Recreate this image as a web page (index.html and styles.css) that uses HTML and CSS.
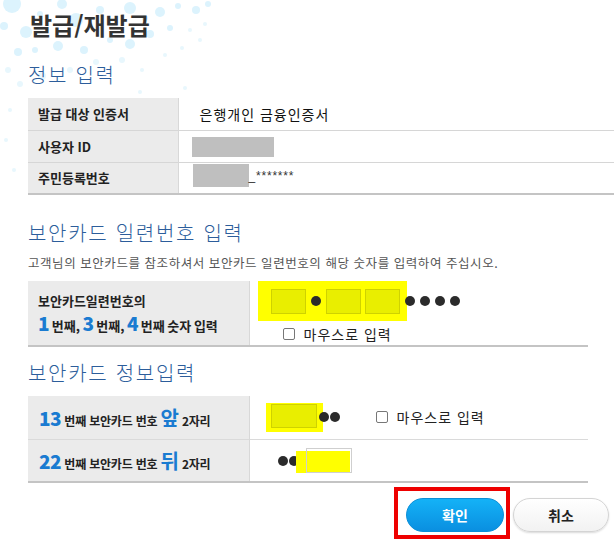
FILE: index.html
```html
<!DOCTYPE html>
<html lang="ko">
<head>
<meta charset="utf-8">
<title>발급/재발급</title>
<link rel="stylesheet" href="styles.css">
</head>
<body>
<div class="page">
  <svg class="bokeh" width="230" height="200" viewBox="0 0 230 200" aria-hidden="true">
    <g fill="#dcf3fd">
      <circle cx="12" cy="4" r="9"/><circle cx="26" cy="32" r="6"/><circle cx="4" cy="26" r="4"/>
      <circle cx="40" cy="14" r="3"/><circle cx="62" cy="4" r="5"/><circle cx="76" cy="20" r="7"/>
      <circle cx="100" cy="10" r="4"/><circle cx="130" cy="8" r="6"/><circle cx="145" cy="18" r="3"/>
      <circle cx="160" cy="12" r="5"/><circle cx="178" cy="6" r="3"/><circle cx="196" cy="10" r="4"/>
      <circle cx="208" cy="4" r="3"/><circle cx="18" cy="52" r="4"/><circle cx="35" cy="50" r="3"/>
      <circle cx="58" cy="46" r="5"/><circle cx="84" cy="50" r="4"/><circle cx="110" cy="40" r="3"/>
      <circle cx="130" cy="44" r="5"/><circle cx="150" cy="34" r="4"/><circle cx="170" cy="28" r="3"/>
    </g>
    <g fill="#e8f7fd">
      <circle cx="190" cy="30" r="2"/><circle cx="205" cy="24" r="2"/><circle cx="8" cy="70" r="3"/>
      <circle cx="20" cy="84" r="3"/><circle cx="42" cy="76" r="4"/><circle cx="70" cy="70" r="3"/>
      <circle cx="96" cy="62" r="3"/><circle cx="122" cy="60" r="3"/><circle cx="142" cy="70" r="2"/>
      <circle cx="165" cy="55" r="2"/><circle cx="182" cy="48" r="2"/><circle cx="200" cy="40" r="2"/>
      <circle cx="10" cy="110" r="2"/><circle cx="6" cy="140" r="2"/><circle cx="14" cy="170" r="2"/>
      <circle cx="140" cy="92" r="2"/><circle cx="185" cy="88" r="2"/>
    </g>
  </svg>

  <h1 class="title">발급/재발급</h1>

  <h2 class="section">정보 입력</h2>
  <table class="info">
    <tr>
      <th>발급 대상 인증서</th>
      <td><span class="cert">은행개인 금융인증서</span></td>
    </tr>
    <tr>
      <th>사용자 ID</th>
      <td><span class="mask mask-id"></span></td>
    </tr>
    <tr>
      <th>주민등록번호</th>
      <td><span class="rrn"><span class="mask mask-rrn"></span><span class="stars">_*******</span></span></td>
    </tr>
  </table>

  <h2 class="section sec-serial">보안카드 일련번호 입력</h2>
  <p class="desc">고객님의 보안카드를 참조하셔서 보안카드 일련번호의 해당 숫자를 입력하여 주십시오.</p>
  <table class="card serial">
    <tr>
      <th>
        <div class="lbl-line">보안카드일련번호의</div>
        <div class="lbl-line lbl-nums"><b class="num">1</b> 번째, <b class="num">3</b> 번째, <b class="num">4</b> 번째 숫자 입력</div>
      </th>
      <td>
        <div class="serial-row">
          <span class="hl hl-serial">
            <span class="box"></span><span class="dot"></span><span class="box"></span><span class="box"></span>
          </span>
          <span class="dots"><span class="dot"></span><span class="dot"></span><span class="dot"></span><span class="dot"></span></span>
        </div>
        <label class="mouse mouse-serial"><span class="chk"></span>마우스로 입력</label>
      </td>
    </tr>
  </table>

  <h2 class="section sec-info">보안카드 정보입력</h2>
  <table class="card info-card">
    <tr>
      <th><b class="num">13</b> 번째 보안카드 번호 <b class="big">앞</b> 2자리</th>
      <td>
        <div class="front-row">
          <span class="hl hl-front"><span class="box wide"></span></span>
          <span class="dots tight"><span class="dot"></span><span class="dot"></span></span>
          <label class="mouse mouse-front"><span class="chk"></span>마우스로 입력</label>
        </div>
      </td>
    </tr>
    <tr>
      <th><b class="num">22</b> 번째 보안카드 번호 <b class="big">뒤</b> 2자리</th>
      <td>
        <div class="back-row">
          <span class="dots tight"><span class="dot"></span><span class="dot"></span></span>
          <span class="hl hl-back"><span class="box gray"></span></span>
        </div>
      </td>
    </tr>
  </table>

  <div class="actions">
    <span class="focus-frame"><button class="btn primary" type="button">확인</button></span>
    <button class="btn secondary" type="button">취소</button>
  </div>
</div>
</body>
</html>
```

FILE: styles.css
```css
* { box-sizing: border-box; }
html, body { margin: 0; padding: 0; background: #fff; }
body {
  font-family: "Noto Sans CJK KR", "Noto Sans", "Liberation Sans", sans-serif;
  color: #222;
  width: 614px;
  overflow: hidden;
}
.page {
  position: relative;
  padding: 9px 0 0 28px;
}
.bokeh {
  position: absolute;
  left: 0;
  top: 0;
  z-index: 0;
}
.page > *:not(.bokeh) { position: relative; z-index: 1; }

.title {
  margin: 0 0 0 2px;
  font-size: 24px;
  line-height: 31px;
  font-weight: bold;
  color: #333;
}
.section {
  margin: 22px 0 10px 0;
  font-size: 20px;
  line-height: 26px;
  font-weight: 300;
  color: #2c5d9b;
  letter-spacing: 1.7px;
}
.sec-serial { margin-top: 25px; }
.sec-info { margin-top: 13px; }

table { border-collapse: collapse; }
th, td { padding: 0; text-align: left; vertical-align: middle; }

.info { width: 586px; }
.info tr { height: 32px; border-bottom: 1px solid #d6d6d6; }
.info tr:last-child { border-bottom: 2px solid #c4c4c4; }
.info th {
  width: 150px;
  background: #ebebeb;
  border-right: 1px solid #d8d8d8;
  padding-left: 10px;
  font-size: 13px;
  font-weight: bold;
  color: #222;
}
.info td { padding-left: 13px; font-size: 14px; }
.cert { margin-left: 8px; color: #111; letter-spacing: 1px; }
.mask { display: inline-block; background: #bfbfbf; vertical-align: middle; }
.mask-id { width: 82px; height: 20px; }
.rrn { display: inline-flex; align-items: flex-end; }
.mask-rrn { width: 56px; height: 23px; margin-left: 1px; }
.stars {
  font-family: "Liberation Sans", sans-serif;
  font-size: 12px;
  line-height: 12px;
  color: #333;
  letter-spacing: 0.8px;
  margin-bottom: 5px;
}

.desc {
  margin: -2px 0 9px 0;
  font-size: 12.5px;
  line-height: 18px;
  letter-spacing: 0.55px;
  color: #555;
}

.card { width: 560px; }
.card tr { border-bottom: 1px solid #dadada; }
.card tr:last-child { border-bottom: 2px solid #c4c4c4; }
.card th {
  width: 221px;
  background: #ebebeb;
  border-right: 1px solid #d8d8d8;
  padding-left: 11px;
  font-size: 12px;
  font-weight: bold;
  color: #222;
  letter-spacing: -0.2px;
}
.num { color: #1a7bd1; font-size: 19px; letter-spacing: -0.5px; }
.big { color: #1a7bd1; font-size: 20px; font-weight: bold; }

.serial tr { height: 63px; }
.serial th { padding-left: 10px; font-size: 13px; letter-spacing: 0; }
.lbl-line { line-height: 22px; }
.lbl-nums { word-spacing: -1px; }
.serial td { vertical-align: top; padding-left: 8px; }
.serial-row { display: flex; align-items: center; }
.hl { display: inline-flex; align-items: center; background: #ffff00; }
.hl-serial { height: 40px; padding: 0 7px 0 13px; }
.box {
  display: inline-block;
  width: 35px;
  height: 25px;
  background: #e9ee00;
  border: 1px solid #cfd200;
}
.hl-serial .box + .box { margin-left: 4px; }
.hl-serial .dot { margin: 0 5px; }
.dot {
  display: inline-block;
  width: 10px;
  height: 10px;
  border-radius: 50%;
  background: #2b2b2b;
}
.dots { display: inline-flex; align-items: center; gap: 5px; }
.serial-row .dots { margin-left: -2px; }
.dots.tight { gap: 1px; }

.mouse {
  display: inline-flex;
  align-items: center;
  font-size: 14px;
  letter-spacing: 1px;
  color: #222;
}
.chk {
  display: inline-block;
  width: 12px;
  height: 12px;
  border: 1px solid #777;
  border-radius: 2px;
  background: #fff;
  margin-right: 9px;
}
.mouse-serial { margin: 1px 0 0 25px; line-height: 16px; }

.info-card tr { height: 43px; }
.info-card td { padding-left: 16px; }
.front-row, .back-row { display: flex; align-items: center; }
.hl-front { padding: 1px 6px 4px 5px; }
.box.wide { width: 46px; height: 24px; }
.front-row .dots { margin-left: -4px; }
.mouse-front { margin-left: 36px; }
.back-row { padding-left: 12px; }
.back-row .dots { margin-top: 2px; }
.hl-back { position: relative; margin-left: -3px; height: 22px; width: 54px; margin-top: 4px; }
.box.gray {
  position: absolute;
  left: 10px;
  top: -3px;
  width: 46px;
  height: 25px;
  background: transparent;
  border: 1px solid #cfcfcf;
}

.actions {
  display: flex;
  justify-content: flex-end;
  align-items: center;
  width: 581px;
  margin-top: 4px;
}
.focus-frame {
  display: inline-flex;
  border: 4px solid #ee0000;
  padding: 7px 2px 3px 8px;
}
.btn {
  font-family: inherit;
  height: 34px;
  border-radius: 17px;
  font-size: 14px;
  font-weight: bold;
  cursor: pointer;
}
.primary {
  width: 98px;
  border: 1px solid #0a8fd8;
  color: #fff;
  background: linear-gradient(#14b2f7, #0a8fe0);
}
.secondary {
  width: 96px;
  margin: 4px 0 0 3px;
  border: 1px solid #d4d4d4;
  color: #222;
  background: linear-gradient(#ffffff, #f2f2f2);
  box-shadow: 0 1px 2px rgba(0,0,0,0.15);
}
```
